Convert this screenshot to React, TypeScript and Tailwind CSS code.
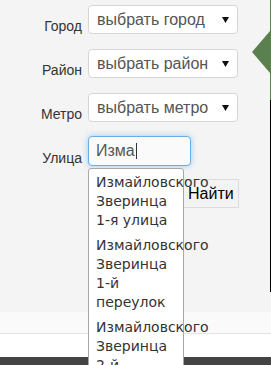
import React from "react";

// rows of the search form
const selects = [
    { label: "Город", text: "выбрать город" },
    { label: "Район", text: "выбрать район" },
    { label: "Метро", text: "выбрать метро" },
];

const suggestions = [
    "Измайловского Зверинца 1-я улица",
    "Измайловского Зверинца 1-й переулок",
    "Измайловского Зверинца 2-й переулок",
];

const Arrow = () => (
    <svg width="7" height="6" viewBox="0 0 7 6">
        <polygon points="0,0 7,0 3.5,6" fill="#111" />
    </svg>
);

const App: React.FC = () => {
    return (
        <div
            className="relative flex h-[365px] w-[271px] flex-col overflow-hidden bg-[#f4f4f4]"
            style={{ fontFamily: '"Liberation Sans", Arial, sans-serif' }}
        >
            <div className="flex h-[312px]">
                <div className="flex flex-1 flex-col pt-[5px]">
                    {selects.map((s) => (
                        <div key={s.label} className="mb-[15px] flex h-[29px] items-end">
                            <label className="w-[82px] pr-0 text-right text-[14px] leading-[16px] text-[#333]">
                                {s.label}
                            </label>
                            <div className="ml-[6px] flex h-[29px] w-[150px] items-center justify-between rounded-[4px] border border-[#d6d6d6] bg-white pl-[8px] pr-[8px] text-[16px] text-[#555]">
                                <span>{s.text}</span>
                                <Arrow />
                            </div>
                        </div>
                    ))}
                    <div className="flex h-[29px] items-end">
                        <label className="w-[82px] text-right text-[14px] leading-[16px] text-[#333]">Улица</label>
                        <div className="ml-[6px] flex h-[30px] w-[103px] items-center rounded-[4px] border border-[#66afe9] bg-[#fafafa] px-[7px] text-[16px] text-[#555] shadow-[0_0_6px_rgba(102,175,233,0.6)]">
                            <span>Изма</span>
                            <span className="ml-[1px] inline-block h-[16px] w-[1px] bg-[#333]" />
                        </div>
                    </div>
                    <div className="pl-[183px] pt-[13px]">
                        <button className="h-[29px] w-[56px] border border-[#dcdcdc] bg-[#f3f3f3] pl-[4px] text-left text-[16px] text-black">
                            Найти
                        </button>
                    </div>
                </div>
                <div className="relative flex w-[1px] flex-col">
                    <div className="h-[100px] bg-[#5b8050]" />
                    <div className="h-[192px] bg-black" />
                    <svg className="absolute left-[-18px] top-[31px]" width="19" height="42" viewBox="0 0 19 42">
                        <polygon points="0,21 18,0 19,0 19,42 18,42" fill="#5b8050" />
                    </svg>
                </div>
            </div>
            <div className="h-[22px] border-b border-[#e4e4e4] bg-[#fafafa]" />
            <div className="h-[23px] bg-white" />
            <div className="flex-1 bg-[#444]" />

            {/* autocomplete list */}
            <div
                className="absolute left-[88px] top-[168px] h-[260px] w-[96px] rounded-t-[3px] border border-[#a8a8a8] bg-white pt-[1px] pl-[7px] pr-[4px] text-[14px] leading-[19px] text-[#333]"
                style={{ fontFamily: '"DejaVu Sans", Verdana, sans-serif' }}
            >
                {suggestions.map((s) => (
                    <div key={s} className="py-[3px]">
                        {s}
                    </div>
                ))}
            </div>
        </div>
    );
};

export default App;
